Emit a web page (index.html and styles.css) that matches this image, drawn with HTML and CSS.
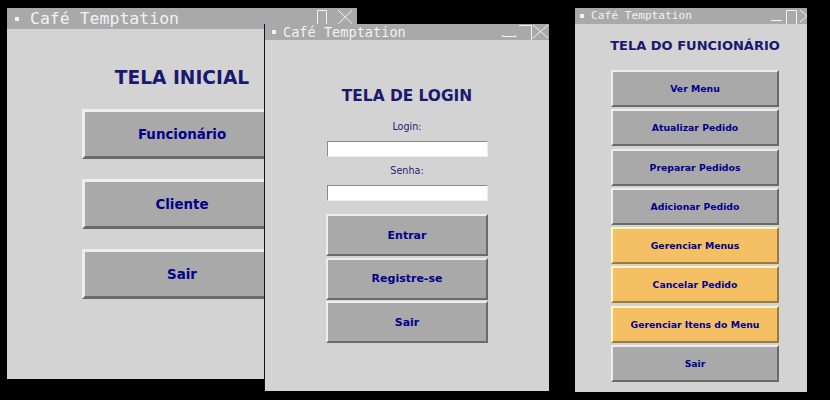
FILE: index.html
```html
<!DOCTYPE html>
<html lang="pt">
<head>
<meta charset="utf-8">
<title>Café Temptation</title>
<link rel="stylesheet" href="styles.css">
</head>
<body>
<div class="desktop">

  <div class="win win-home">
    <div class="titlebar tb-home">
      <span class="bullet"></span>
      <span class="wtitle">Café Temptation</span>
      <svg class="ctl ctl-home" width="40" height="21" viewBox="0 0 40 21">
        <path d="M1.5 21 V2.5 H10.5 V21" fill="none" stroke="#f2f2f2" stroke-width="1"/>
        <path d="M22 2 L36.5 16 M36.5 2 L22 16" fill="none" stroke="#f2f2f2" stroke-width="1"/>
      </svg>
    </div>
    <div class="body body-home">
      <h1 class="heading h-home">TELA INICIAL</h1>
      <div class="stack stack-home">
        <button class="btn btn-home">Funcionário</button>
        <button class="btn btn-home">Cliente</button>
        <button class="btn btn-home">Sair</button>
      </div>
    </div>
  </div>

  <div class="win win-login">
    <div class="titlebar tb-login">
      <span class="bullet"></span>
      <span class="wtitle">Café Temptation</span>
      <svg class="ctl ctl-login" width="48" height="16" viewBox="0 0 48 16">
        <path d="M1 12.5 H15 M1.5 11 V12.5 M14.5 11 V12.5" fill="none" stroke="#f2f2f2" stroke-width="1"/>
        <path d="M18 1.5 H30.5 V16" fill="none" stroke="#f2f2f2" stroke-width="1"/>
        <path d="M32 1 L47 14 M47 1 L32 14" fill="none" stroke="#f2f2f2" stroke-width="1"/>
      </svg>
    </div>
    <div class="body body-login">
      <h1 class="heading h-login">TELA DE LOGIN</h1>
      <label class="lbl lbl-first" for="login">Login:</label>
      <input class="entry" id="login" type="text">
      <label class="lbl" for="senha">Senha:</label>
      <input class="entry" id="senha" type="password">
      <div class="stack stack-login">
        <button class="btn btn-login">Entrar</button>
        <button class="btn btn-login">Registre-se</button>
        <button class="btn btn-login">Sair</button>
      </div>
    </div>
  </div>

  <div class="win win-staff">
    <div class="staff-inner">
      <div class="titlebar tb-staff">
        <span class="bullet"></span>
        <span class="wtitle">Café Temptation</span>
        <svg class="ctl ctl-staff" width="45" height="16" viewBox="0 0 45 16">
          <path d="M1 12.5 H12" fill="none" stroke="#f2f2f2" stroke-width="1"/>
          <path d="M16.5 16 V2.5 H26.5 V16" fill="none" stroke="#f2f2f2" stroke-width="1"/>
          <path d="M30 2 L44 14 M44 2 L30 14" fill="none" stroke="#f2f2f2" stroke-width="1"/>
        </svg>
      </div>
      <div class="body body-staff">
        <h1 class="heading h-staff">TELA DO FUNCIONÁRIO</h1>
        <div class="stack stack-staff">
          <button class="btn btn-staff">Ver Menu</button>
          <button class="btn btn-staff">Atualizar Pedido</button>
          <button class="btn btn-staff">Preparar Pedidos</button>
          <button class="btn btn-staff">Adicionar Pedido</button>
          <button class="btn btn-staff btn-warm">Gerenciar Menus</button>
          <button class="btn btn-staff btn-warm">Cancelar Pedido</button>
          <button class="btn btn-staff btn-warm">Gerenciar Itens do Menu</button>
          <button class="btn btn-staff">Sair</button>
        </div>
      </div>
    </div>
  </div>

</div>
</body>
</html>
```

FILE: styles.css
```css
* { box-sizing: border-box; }

html, body {
  margin: 0;
  padding: 0;
  background: #000;
}

.desktop {
  position: relative;
  width: 830px;
  height: 400px;
  background: #000;
  overflow: hidden;
  font-family: "DejaVu Sans", sans-serif;
}

.win {
  position: absolute;
  background: #d3d3d3;
  overflow: hidden;
}

.win-home  { left: 7px;   top: 8px;  width: 350px; height: 371px; }
.win-login { left: 264px; top: 24px; width: 285px; height: 367px; border-left: 1px solid #101028; }
.win-staff { left: 575px; top: 8px;  width: 232px; height: 384px; }

.staff-inner { width: 240px; }

/* title bars */
.titlebar {
  display: flex;
  align-items: center;
  background: #a9a9a9;
  color: #f2f2f2;
  font-family: "DejaVu Sans Mono", monospace;
  white-space: nowrap;
}
.bullet { display: block; background: #f2f2f2; flex: none; }
.ctl { display: block; margin-left: auto; flex: none; }

.tb-home { height: 21px; padding-left: 8px; }
.tb-home .bullet { width: 4px; height: 4px; margin-right: 11px; }
.tb-home .wtitle { font-size: 16.5px; line-height: 21px; }
.tb-home .ctl { margin-right: 1px; align-self: flex-end; }

.tb-login { height: 16px; padding-left: 7px; }
.tb-login .bullet { width: 4px; height: 4px; margin-right: 7px; }
.tb-login .wtitle { font-size: 13.6px; line-height: 16px; }
.tb-login .ctl { margin-right: 0; }

.tb-staff { height: 16px; padding-left: 5px; }
.tb-staff .bullet { width: 3.5px; height: 3.5px; margin-right: 7.5px; }
.tb-staff .wtitle { font-size: 11.2px; line-height: 16px; }
.tb-staff .ctl { margin-right: 0; }

/* bodies */
.body {
  display: flex;
  flex-direction: column;
  align-items: center;
}
.heading {
  margin: 0;
  font-weight: bold;
  color: #191970;
  white-space: nowrap;
}

.body-home { padding-top: 38px; }
.h-home { font-size: 18.6px; line-height: 22px; }

.body-login { padding-top: 47px; }
.h-login { font-size: 15.4px; line-height: 18px; }

.body-staff { padding-top: 14px; }
.h-staff { font-size: 13px; line-height: 16px; }

.stack { display: flex; flex-direction: column; }
.stack-home  { margin-top: 20px; gap: 20px; }
.stack-login { margin-top: 13px; gap: 1.5px; }
.stack-staff { margin-top: 16px; gap: 2.3px; }

/* raised Tk-style buttons */
.btn {
  display: flex;
  align-items: center;
  justify-content: center;
  padding: 0;
  margin: 0;
  background: #a9a9a9;
  color: #00008b;
  font-family: "DejaVu Sans", sans-serif;
  font-weight: bold;
  border-style: solid;
  border-color: #eeeeee #6a6a6a #6a6a6a #eeeeee;
  white-space: nowrap;
}
.btn-home  { width: 200px; height: 50px; border-width: 3px; font-size: 13.4px; }
.btn-login { width: 162px; height: 42px; border-width: 2px; font-size: 11px; }
.btn-staff { width: 168px; height: 37px; border-width: 2px; font-size: 9.3px; }

.btn-warm {
  background: #f4c063;
  border-color: #fff8c4 #9c7a3c #9c7a3c #fff8c4;
}

/* login form */
.lbl {
  display: block;
  margin-top: 8px;
  font-size: 9.6px;
  line-height: 12px;
  color: #1e1e78;
}
.lbl-first { margin-top: 16px; }

.entry {
  display: block;
  width: 161px;
  height: 16px;
  margin: 8px 0 0 0;
  padding: 0;
  background: #fff;
  border-style: solid;
  border-width: 1px;
  border-color: #8a8a8a #ececec #ececec #8a8a8a;
  outline: none;
}
```
